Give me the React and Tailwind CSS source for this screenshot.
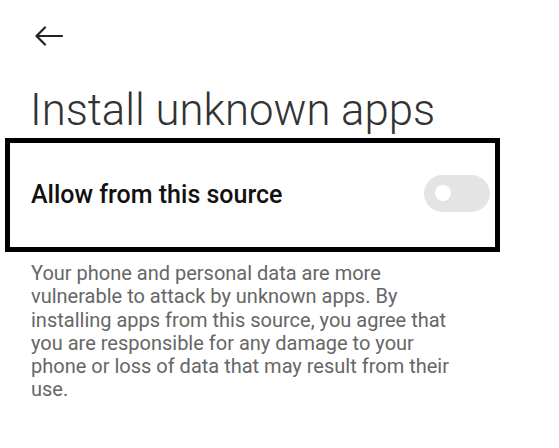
export default function App() {
  return (
    <div className="w-[559px] h-[448px] bg-white overflow-hidden" style={{ fontFamily: 'Roboto, "Liberation Sans", sans-serif' }}>
      <div className="pl-[35px] pt-[26px]">
        <svg width="28" height="20" viewBox="0 0 28 20" fill="none" stroke="#222" strokeWidth="2.2" strokeLinecap="round" strokeLinejoin="round">
          <path d="M27 10H2M10 1.5L1.5 10L10 18.5" />
        </svg>
      </div>
      <h1 className="pl-[30px] mt-[36px] text-[43.7px] leading-[56px] font-light text-[#333]">Install unknown apps</h1>
      <div className="ml-[5px] w-[495px] h-[114px] border-[5px] border-black flex items-center justify-between pl-[21px] pr-[5px]">
        <span className="text-[25px] font-medium text-[#111]">Allow from this source</span>
        <div className="w-[66px] h-[37px] rounded-full bg-[#e4e4e4] flex items-center pl-[11px] -mt-[4px]">
          <div className="w-[16px] h-[16px] rounded-full bg-white" />
        </div>
      </div>
      <p className="pl-[31px] w-[470px] mt-[10px] text-[20px] leading-[23.3px] text-[#666]">
        Your phone and personal data are more vulnerable to attack by unknown apps. By installing apps from this source, you agree that you are responsible for any damage to your phone or loss of data that may result from their use.
      </p>
    </div>
  )
}
